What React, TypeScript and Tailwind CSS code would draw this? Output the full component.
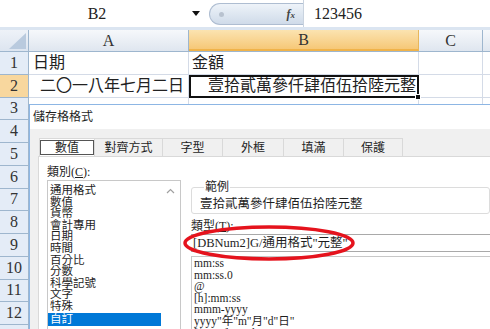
const cjk = "font-['Liberation_Serif','Noto_Sans_CJK_TC',serif]";

const categories = [
  "通用格式",
  "數值",
  "貨幣",
  "會計專用",
  "日期",
  "時間",
  "百分比",
  "分數",
  "科學記號",
  "文字",
  "特殊",
  "自訂",
];

const formats = [
  "mm:ss",
  "mm:ss.0",
  "@",
  "[h]:mm:ss",
  "mmm-yyyy",
  'yyyy"年"m"月"d"日"',
  '[$-404]e/m/d',
];

const tabs = [
  { label: "數值", w: "w-[56px]" },
  { label: "對齊方式", w: "w-[68px]" },
  { label: "字型", w: "w-[60px]" },
  { label: "外框", w: "w-[61px]" },
  { label: "填滿", w: "w-[60px]" },
  { label: "保護", w: "w-[59px]" },
];

const rows = [1, 2, 3, 4, 5, 6, 7, 8, 9, 10, 11, 12, 13];

function FormulaBar() {
  return (
    <div className="flex h-[27px] bg-white">
      <div className="flex w-[209px] items-center">
        <div className={`w-[194px] text-center text-[16px] text-[#222] ${cjk}`}>B2</div>
        <svg width="8" height="5" viewBox="0 0 8 5" className="ml-[-2px]">
          <path d="M0 0 H8 L4 5 Z" fill="#111" />
        </svg>
      </div>
      <div className="mt-[3px] flex h-[22px] w-[94px] items-center rounded-l-full border border-r-0 border-[#aebdd1] bg-gradient-to-b from-[#eef3f9] to-[#cfdbe9]">
        <div className="ml-[9px] h-[5px] w-[5px] rounded-full bg-[#b8c2cf]" />
        <div className="ml-auto mr-[8px] font-['Liberation_Serif',serif] text-[12px] font-bold italic text-[#444]">
          f<span className="text-[9px]">x</span>
        </div>
      </div>
      <div className="flex flex-1 items-center border-l border-[#c9d3df] pl-[10px]">
        <span className={`text-[16px] text-[#222] ${cjk}`}>123456</span>
      </div>
    </div>
  );
}

function ColumnHeaders() {
  return (
    <div className={`flex h-[22px] border-b border-[#9eb6ce] text-[16px] text-[#333] ${cjk}`}>
      <div className="relative w-[29px] border-r border-[#9eb6ce] bg-gradient-to-b from-[#eef2f8] to-[#dde5f0]">
        <svg width="29" height="21" viewBox="0 0 29 21" className="absolute left-0 top-0">
          <path d="M9 19 H26 V3 Z" fill="#b9cade" />
        </svg>
      </div>
      <div className="flex w-[160px] items-center justify-center border-r border-[#9eb6ce] bg-gradient-to-b from-[#f6f8fb] to-[#dfe6ef]">
        A
      </div>
      <div className="flex w-[230px] items-center justify-center border-b-2 border-r border-[#e7b75c] border-b-[#f0b34a] bg-gradient-to-b from-[#fbe3b0] to-[#f6c877]">
        B
      </div>
      <div className="flex w-[64px] items-center justify-center border-r border-[#9eb6ce] bg-gradient-to-b from-[#f6f8fb] to-[#dfe6ef]">
        C
      </div>
      <div className="flex-1 bg-gradient-to-b from-[#f6f8fb] to-[#dfe6ef]" />
    </div>
  );
}

function SheetRow({ n }: { n: number }) {
  const selected = n === 2;
  return (
    <div className={`flex h-[22.75px] text-[16px] text-[#222] ${cjk}`}>
      <div
        className={`flex w-[29px] items-center justify-center border-b border-r border-[#9eb6ce] text-[#333] ${
          selected ? "bg-[#f8d79e]" : "bg-[#e4ecf7]"
        }`}
      >
        {n}
      </div>
      <div className="flex w-[160px] items-center border-b border-r border-[#d4dbe7] pl-[4px]">
        {n === 1 && "日期"}
        {n === 2 && <span className="ml-auto pr-[4px]">二〇一八年七月二日</span>}
      </div>
      {selected ? (
        <div className="relative flex w-[230px] items-center border-2 border-[#111] pl-[17px]">
          壹拾貳萬參仟肆佰伍拾陸元整
          <span className="absolute bottom-[-4px] right-[-4px] h-[6px] w-[6px] border border-white bg-[#111]" />
        </div>
      ) : (
        <div className="flex w-[230px] items-center border-b border-r border-[#d4dbe7] pl-[3px]">
          {n === 1 && "金額"}
        </div>
      )}
      <div className="w-[64px] border-b border-r border-[#d4dbe7]" />
      <div className="flex-1 border-b border-[#d4dbe7]" />
    </div>
  );
}

function ChevronUp() {
  return (
    <svg width="9" height="6" viewBox="0 0 9 6">
      <path d="M1 5 L4.5 1.5 L8 5" fill="none" stroke="#a0a0a0" strokeWidth="1.2" />
    </svg>
  );
}

function FormatDialog() {
  return (
    <div className={`absolute left-[29px] top-[104px] h-[225px] w-[461px] overflow-hidden border-l border-t border-[#8db6e4] bg-white text-[12px] text-[#1e1e1e] ${cjk}`}>
      <div className="flex h-[24px] items-center pl-[3px]">儲存格格式</div>
      <div className="h-[200px] bg-[#f0f0f0] pl-[8px] pt-[9px]">
        <div className="flex h-[18px] pl-[1px]">
          {tabs.map((t, i) => (
            <div
              key={t.label}
              className={`flex ${t.w} items-center justify-center border-r border-t border-[#d9d9d9] ${
                i === 0 ? "border-l bg-white" : "bg-[#f0f0f0]"
              }`}
            >
              {i === 0 ? (
                <span className="flex h-[15px] w-[54px] items-center justify-center border border-[#555]">
                  {t.label}
                </span>
              ) : (
                t.label
              )}
            </div>
          ))}
        </div>
        <div className="flex h-[180px] items-start border-l border-t border-[#d9d9d9] bg-white pl-[8px] pt-[8px]">
          <div className="flex w-[134px] flex-col">
            <div className="h-[15px] leading-[14px]">
              類別(<span className="underline">C</span>):
            </div>
            <div className="flex h-[160px] border border-[#c8c8c8]">
              <div className="flex flex-1 flex-col pt-[4px] text-[11.5px]">
                {categories.map((c) => (
                  <div
                    key={c}
                    className={`h-[11.6px] shrink-0 pl-[2px] leading-[11.6px] ${
                      c === "自訂" ? "h-[13px] bg-[#0078d7] leading-[13px] text-white" : ""
                    }`}
                  >
                    {c}
                  </div>
                ))}
              </div>
              <div className="flex w-[19px] justify-center pt-[7px]">
                <ChevronUp />
              </div>
            </div>
          </div>
          <div className="ml-[10px] flex flex-1 flex-col pt-[16px]">
            <fieldset className="h-[33px] rounded-[3px] border border-[#dcdcdc] pl-[8px]">
              <legend className="ml-[4px] px-[1px] leading-[12px]">範例</legend>
              <div className="pt-[4px] text-[12.5px] leading-[14px]">壹拾貳萬參仟肆佰伍拾陸元整</div>
            </fieldset>
            <div className="mt-[5px] h-[15px] leading-[14px]">
              類型(<span className="underline">T</span>):
            </div>
            <div className="flex h-[18px] items-center border-y border-[#a9a9a9] pl-[2px] text-[12.5px]">
              [DBNum2]G/通用格式"元整"
            </div>
            <div className="mt-[4px] flex h-[80px] flex-col border-l border-t border-[#c8c8c8] pl-[2px] pt-[1px] text-[11.5px]">
              {formats.map((f) => (
                <div key={f} className="h-[11.6px] shrink-0 leading-[11.6px]">
                  {f}
                </div>
              ))}
            </div>
          </div>
        </div>
      </div>
    </div>
  );
}

export default function App() {
  return (
    <div className="relative h-[329px] w-[490px] overflow-hidden bg-white">
      <FormulaBar />
      <div className="h-[3px] bg-[#dbe5f1]" />
      <ColumnHeaders />
      {rows.map((n) => (
        <SheetRow key={n} n={n} />
      ))}
      <FormatDialog />
      <svg width="176" height="40" viewBox="0 0 176 40" className="absolute left-[181px] top-[223px]">
        <ellipse cx="88" cy="20" rx="84" ry="16" fill="none" stroke="#e5131d" strokeWidth="3.5" />
      </svg>
    </div>
  );
}
